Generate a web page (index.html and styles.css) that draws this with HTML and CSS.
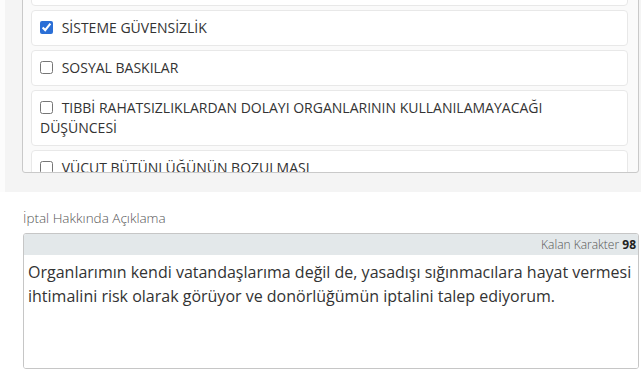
FILE: index.html
```html
<!DOCTYPE html>
<html lang="tr">

<head>
    <meta charset="UTF-8">
    <meta name="viewport" content="width=device-width, initial-scale=1.0">
    <title>Bağışçılık İptali</title>
    <link rel="stylesheet" href="styles.css">
</head>

<body>
    <div class="reason-panel">
        <div class="reason-list">
            <label class="reason-item">
                <input type="checkbox"> AİLE BASKISI
            </label>
            <label class="reason-item">
                <input type="checkbox" checked> SİSTEME GÜVENSİZLİK
            </label>
            <label class="reason-item">
                <input type="checkbox"> SOSYAL BASKILAR
            </label>
            <label class="reason-item">
                <input type="checkbox"> TIBBİ RAHATSIZLIKLARDAN DOLAYI ORGANLARININ KULLANILAMAYACAĞI DÜŞÜNCESİ
            </label>
            <label class="reason-item">
                <input type="checkbox"> VÜCUT BÜTÜNLÜĞÜNÜN BOZULMASI
            </label>
        </div>
    </div>

    <div class="form-group">
        <label for="aciklama">İptal Hakkında Açıklama</label>
        <div class="textarea-box">
            <div class="char-counter">Kalan Karakter <b>98</b></div>
            <textarea id="aciklama" rows="5">Organlarımın kendi vatandaşlarıma değil de, yasadışı sığınmacılara hayat vermesi ihtimalini risk olarak görüyor ve donörlüğümün iptalini talep ediyorum.</textarea>
        </div>
    </div>
</body>

</html>
```

FILE: styles.css
```css
body {
    font-family: 'Open Sans', 'Noto Sans', sans-serif;
    background-color: #fcfcfc;
    margin: 0;
    padding: 0;
    color: #333;
    overflow: hidden;
}

.reason-panel {
    background-color: #f4f4f4;
    margin-left: 5px;
    margin-top: -35px;
    padding: 0 2px 19px 17px;
}

.reason-list {
    border: 1px solid #c9c9c9;
    border-radius: 3px;
    background-color: #fafafa;
    height: 202px;
    overflow: hidden;
    padding: 4px 10px 0 8px;
    display: flex;
    flex-direction: column;
    gap: 4px;
}

.reason-item {
    display: block;
    flex-shrink: 0;
    background-color: #fff;
    border: 1px solid #e8e8e8;
    border-radius: 4px;
    padding: 7px 8px;
    font-size: 14px;
    line-height: 20px;
}

.reason-item input {
    margin: 0 5px 0 0;
    width: 13px;
    height: 13px;
    vertical-align: -1px;
    accent-color: #2b6fd6;
}

.form-group {
    padding: 17px 2px 12px 23px;
    background-color: #fff;
}

.form-group > label {
    display: block;
    font-size: 13.5px;
    font-weight: 300;
    color: #555;
    line-height: 18px;
    margin-bottom: 6px;
}

.textarea-box {
    border: 1px solid #c6c6c6;
    border-radius: 3px;
    overflow: hidden;
}

.char-counter {
    background-color: #e3e8ea;
    text-align: right;
    font-size: 12px;
    font-weight: 300;
    color: #555;
    line-height: 21px;
    padding-right: 2px;
}

.char-counter b {
    font-weight: 700;
    color: #222;
}

.textarea-box textarea {
    display: block;
    width: 100%;
    box-sizing: border-box;
    border: none;
    resize: none;
    outline: none;
    font-family: 'Open Sans', 'Noto Sans', sans-serif;
    font-size: 16px;
    line-height: 24px;
    color: #333;
    padding: 5px 4px;
    height: 113px;
    overflow: hidden;
}
```
